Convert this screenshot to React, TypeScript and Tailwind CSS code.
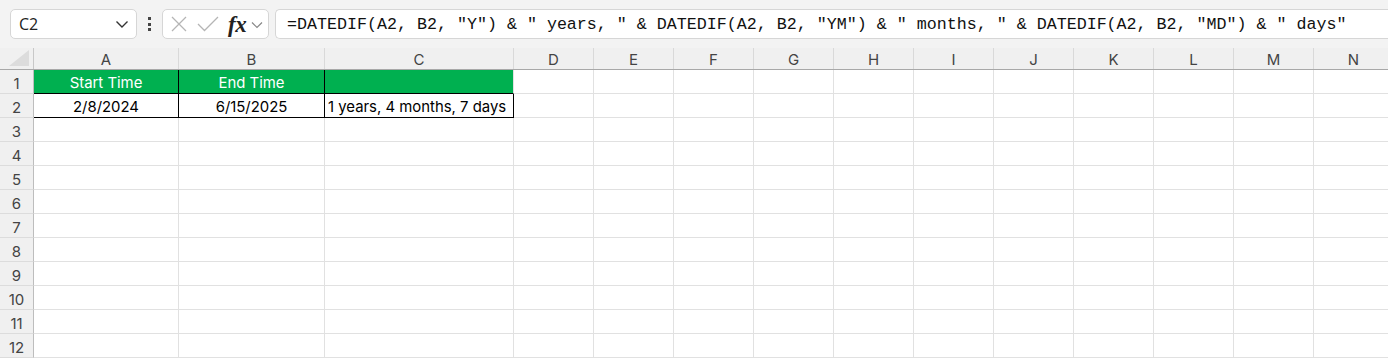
import React from "react";

const cols = [
  { l: "A", w: 145 },
  { l: "B", w: 146 },
  { l: "C", w: 189 },
  { l: "D", w: 80 },
  { l: "E", w: 80 },
  { l: "F", w: 80 },
  { l: "G", w: 80 },
  { l: "H", w: 80 },
  { l: "I", w: 80 },
  { l: "J", w: 80 },
  { l: "K", w: 80 },
  { l: "L", w: 80 },
  { l: "M", w: 80 },
  { l: "N", w: 80 },
];

const FONT = { fontFamily: "Inter, 'Open Sans', sans-serif" };

function Cell({ r, c }: { r: number; c: number }) {
  const w = cols[c].w;
  let cls = "shrink-0 h-full border-r border-b border-[#e1e1e1] flex items-center pt-[4px] text-[14.9px] text-black";
  let content: React.ReactNode = null;
  if (r === 1 && c <= 2) {
    cls = "shrink-0 h-full border-b border-r flex items-center justify-center pt-[4px] text-[14.9px] text-white bg-[#00b050] " + (c < 2 ? "border-r-black border-b-black" : "border-r-[#e1e1e1] border-b-black");
    content = c === 0 ? "Start Time" : c === 1 ? "End Time" : null;
  } else if (r === 2 && c <= 2) {
    cls = "shrink-0 h-full border-b border-r border-black flex items-center pt-[4px] text-[14.9px] text-black " + (c < 2 ? "justify-center" : "justify-start pl-[3px]");
    content = c === 0 ? "2/8/2024" : c === 1 ? "6/15/2025" : "1 years, 4 months, 7 days";
  }
  return (
    <div className={cls} style={{ width: w }}>
      {content}
    </div>
  );
}

export default function App() {
  const rows = Array.from({ length: 12 }, (_, i) => i + 1);
  return (
    <div className="w-[1388px] h-[358px] overflow-hidden bg-white" style={FONT}>
      {/* Formula bar */}
      <div className="h-[48px] bg-[#f3f3f3] flex items-start pt-[9px] pl-[10px] gap-0">
        <div className="w-[127px] h-[30px] bg-white border border-[#d6d6d6] rounded-[5px] flex items-center justify-between pl-[8px] pr-[7px]">
          <span className="text-[16px] text-[#222]" style={{ fontFamily: "'Open Sans', sans-serif" }}>C2</span>
          <svg width="14" height="9" viewBox="0 0 14 9">
            <path d="M1.5 1.5 L7 7 L12.5 1.5" fill="none" stroke="#333" strokeWidth="1.4" />
          </svg>
        </div>
        <div className="w-[25px] h-[30px] flex flex-col items-center justify-center gap-[2.5px]">
          <div className="w-[3px] h-[3px] bg-[#444]" />
          <div className="w-[3px] h-[3px] bg-[#444]" />
          <div className="w-[3px] h-[3px] bg-[#444]" />
        </div>
        <div className="w-[107px] h-[30px] bg-white border border-[#d6d6d6] rounded-[5px] flex items-center pl-[8px]">
          <svg width="16" height="16" viewBox="0 0 16 16">
            <path d="M1 1 L15 15 M15 1 L1 15" stroke="#b5b5b5" strokeWidth="1.3" />
          </svg>
          <svg width="22" height="16" viewBox="0 0 22 16" className="ml-[10px]">
            <path d="M1 8 L7.5 14.5 L21 1" fill="none" stroke="#b5b5b5" strokeWidth="1.3" />
          </svg>
          <span className="ml-[9px] text-[23px] italic font-bold leading-none text-[#222] tracking-[-0.5px]" style={{ fontFamily: "'Liberation Serif', 'DejaVu Serif', serif" }}>
            fx
          </span>
          <svg width="12" height="8" viewBox="0 0 12 8" className="ml-[5px] mt-[2px]">
            <path d="M1 1.5 L6 6.5 L11 1.5" fill="none" stroke="#888" strokeWidth="1.2" />
          </svg>
        </div>
        <div className="ml-[6px] flex-1 h-[30px] bg-white border border-[#d6d6d6] border-r-0 rounded-l-[5px] flex items-center pl-[11px]">
          <span className="text-[16.67px] text-[#111] whitespace-pre" style={{ fontFamily: "'Liberation Mono', 'DejaVu Sans Mono', monospace" }}>
            {'=DATEDIF(A2, B2, "Y") & " years, " & DATEDIF(A2, B2, "YM") & " months, " & DATEDIF(A2, B2, "MD") & " days"'}
          </span>
        </div>
      </div>
      {/* Column header */}
      <div className="h-[22px] flex bg-[#f0f0f0] border-b border-[#a8a8a8]">
        <div className="w-[34px] shrink-0 h-full border-r border-[#c8c8c8] relative">
          <svg width="20" height="16" viewBox="0 0 20 16" className="absolute right-[4px] bottom-[3px]">
            <path d="M20 0 L20 16 L0 16 Z" fill="#dcdcdc" />
          </svg>
        </div>
        {cols.map((c) => (
          <div
            key={c.l}
            className="shrink-0 h-full border-r border-[#d9d9d9] flex items-center justify-center pt-[3px] text-[15px] text-[#444]"
            style={{ width: c.w }}
          >
            {c.l}
          </div>
        ))}
      </div>
      {/* Rows */}
      {rows.map((r) => (
        <div key={r} className="h-[24px] flex">
          <div className="w-[34px] shrink-0 h-full bg-[#f0f0f0] border-r border-[#bdbdbd] border-b border-b-[#dcdcdc] flex items-center justify-center pt-[5px] text-[15px] text-[#444]">
            {r}
          </div>
          {cols.map((_, ci) => (
            <Cell key={ci} r={r} c={ci} />
          ))}
        </div>
      ))}
    </div>
  );
}
